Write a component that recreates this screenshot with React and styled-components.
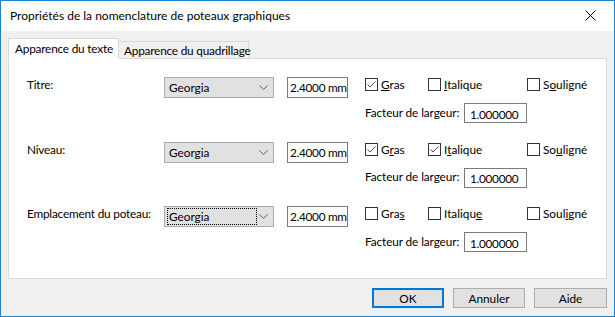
import styled, { createGlobalStyle } from "styled-components";

const GlobalStyle = createGlobalStyle`
  html, body {
    margin: 0;
    padding: 0;
    background: #ffffff;
  }
  * {
    box-sizing: border-box;
  }
`

const Window = styled.div`
  width: 615px;
  height: 317px;
  border: 1px solid #1883d7;
  background: #f0f0f0;
  display: flex;
  flex-direction: column;
  font-family: Lato, "Noto Sans", sans-serif;
  font-size: 11.8px;
  color: #000;
`

const TitleBar = styled.div`
  height: 30px;
  background: #ffffff;
  display: flex;
  align-items: center;
  justify-content: space-between;
  padding: 0 9px 1px 9px;
  font-size: 12px;
`

const CloseBtn = styled.div`
  width: 30px;
  display: flex;
  justify-content: center;
  align-items: center;
`

const Body = styled.div`
  flex: 1;
  display: flex;
  flex-direction: column;
  padding: 7px 7px 0 7px;
`

const TabStrip = styled.div`
  height: 20px;
  display: flex;
  align-items: flex-end;
  position: relative;
  z-index: 1;
`

const Tab = styled.div`
  height: ${p => (p.$active ? "21px" : "17px")};
  margin-bottom: ${p => (p.$active ? "-1px" : "0")};
  width: ${p => p.$w}px;
  margin-left: ${p => (p.$active ? "0" : "-1px")};
  border: 1px solid #d9d9d9;
  border-bottom: ${p => (p.$active ? "1px solid #ffffff" : "none")};
  background: ${p => (p.$active ? "#ffffff" : "#f0f0f0")};
  display: flex;
  align-items: ${p => (p.$active ? "flex-start" : "center")};
  padding: ${p => (p.$active ? "2px 0 0 6px" : "0 0 0 5px")};
  white-space: nowrap;
  letter-spacing: -0.2px;
`

const Panel = styled.div`
  height: 221px;
  border: 1px solid #d9d9d9;
  background: #ffffff;
  padding: 18px 0 0 18px;
  display: flex;
  flex-direction: column;
`

const Group = styled.div`
  height: 64.5px;
  display: grid;
  grid-template-columns: 137px 110px 74px 1fr;
  grid-template-rows: 21px 20px;
  row-gap: 5px;
`

const Label = styled.div`
  line-height: 15px;
  white-space: nowrap;
  letter-spacing: -0.2px;
`

const Combo = styled.div`
  width: 110px;
  height: 21px;
  background: #e1e1e1;
  border: 1px solid #adadad;
  display: flex;
  align-items: center;
  justify-content: space-between;
  padding: 0 5px 0 2px;
`

const ComboText = styled.span`
  flex: 0 0 ${p => (p.$focus ? "90px" : "auto")};
  height: 17px;
  line-height: 15px;
  padding-left: 1px;
  border: 1px dotted ${p => (p.$focus ? "#000" : "transparent")};
`

const Field = styled.div`
  height: ${p => p.$h || 21}px;
  width: ${p => p.$w}px;
  border: 1px solid #7a7a7a;
  background: #fff;
  display: flex;
  align-items: center;
  padding: ${p => p.$pt || 0}px 0 0 ${p => p.$pl || 3}px;
  white-space: nowrap;
  overflow: hidden;
  letter-spacing: -0.3px;
`

const FieldCell = styled.div`
  padding-left: 13px;
  display: flex;
`

const Options = styled.div`
  padding-left: 17px;
  display: grid;
  grid-template-columns: 63px 99px auto;
  align-items: center;
  height: 14px;
`

const Check = styled.label`
  display: flex;
  align-items: center;
  gap: 3px;
  white-space: nowrap;
`

const Box = styled.span`
  width: 13px;
  height: 13px;
  border: 1px solid #333333;
  background: #fff;
  display: flex;
  align-items: center;
  justify-content: center;
`

const U = styled.span`
  text-decoration: underline;
`

const FactorRow = styled.div`
  grid-column: 4;
  grid-row: 2;
  padding-left: 17px;
  display: flex;
  align-items: center;
`

const FactorLabel = styled.span`
  width: 99px;
  white-space: nowrap;
  margin-top: -2px;
  letter-spacing: -0.1px;
`

const Footer = styled.div`
  display: flex;
  justify-content: flex-end;
  gap: 9px;
  margin-top: 9px;
`

const Button = styled.div`
  width: ${p => p.$w}px;
  height: 20px;
  background: #e1e1e1;
  border: ${p => (p.$default ? "2px solid #0078d7" : "1px solid #adadad")};
  display: flex;
  align-items: center;
  justify-content: center;
`

const CheckMark = () => (
  <svg width="11" height="11" viewBox="0 0 11 11">
    <path d="M1.5 5.5 L4 8 L9.5 2.5" fill="none" stroke="#555" strokeWidth="1" />
  </svg>
)

const Chevron = () => (
  <svg width="9" height="5" viewBox="0 0 9 5">
    <path d="M0.5 0.5 L4.5 4.5 L8.5 0.5" fill="none" stroke="#606060" strokeWidth="1" />
  </svg>
)

const Mn = ({ text, idx }) => (
  <span>
    {text.slice(0, idx)}
    <U>{text[idx]}</U>
    {text.slice(idx + 1)}
  </span>
)

const rows = [
  { label: "Titre:", gras: [true, 0], ital: [false, 0], soul: [false, 1], focus: false },
  { label: "Niveau:", gras: [true, 1], ital: [true, 1], soul: [false, 2], focus: false },
  { label: "Emplacement du poteau:", gras: [false, 3], ital: [false, 7], soul: [false, 4], focus: true },
]

const Opt = ({ on, text, idx }) => (
  <Check>
    <Box>{on && <CheckMark />}</Box>
    <Mn text={text} idx={idx} />
  </Check>
)

export default function App() {
  return (
    <>
      <GlobalStyle />
      <Window>
        <TitleBar>
          <span>Propriétés de la nomenclature de poteaux graphiques</span>
          <CloseBtn>
            <svg width="11" height="11" viewBox="0 0 11 11">
              <path d="M0.5 0.5 L10.5 10.5 M10.5 0.5 L0.5 10.5" stroke="#000" strokeWidth="1" />
            </svg>
          </CloseBtn>
        </TitleBar>
        <Body>
          <TabStrip>
            <Tab $active $w={111}>Apparence du texte</Tab>
            <Tab $w={131}>Apparence du quadrillage</Tab>
          </TabStrip>
          <Panel>
            {rows.map((r, i) => (
              <Group key={i}>
                <Label>{r.label}</Label>
                <Combo>
                  <ComboText $focus={r.focus}>Georgia</ComboText>
                  <Chevron />
                </Combo>
                <FieldCell>
                  <Field $w={61} $pl={2}>2.4000 mm</Field>
                </FieldCell>
                <Options>
                  <Opt on={r.gras[0]} text="Gras" idx={r.gras[1]} />
                  <Opt on={r.ital[0]} text="Italique" idx={r.ital[1]} />
                  <Opt on={r.soul[0]} text="Souligné" idx={r.soul[1]} />
                </Options>
                <FactorRow>
                  <FactorLabel>Facteur de largeur:</FactorLabel>
                  <Field $w={63} $h={20} $pl={5} $pt={2}>1.000000</Field>
                </FactorRow>
              </Group>
            ))}
          </Panel>
          <Footer>
            <Button $default $w={72}>OK</Button>
            <Button $w={72}>Annuler</Button>
            <Button $w={73}>Aide</Button>
          </Footer>
        </Body>
      </Window>
    </>
  )
}
